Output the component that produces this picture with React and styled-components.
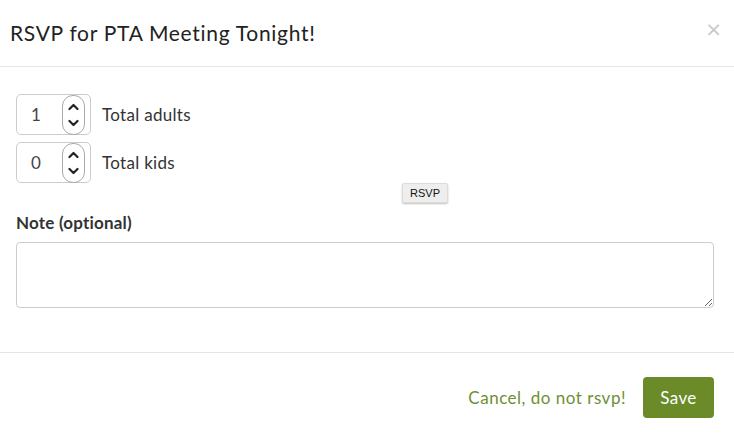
import React from "react";
import styled, { createGlobalStyle } from "styled-components";

const GlobalStyles = createGlobalStyle`
  html, body {
    margin: 0;
    padding: 0;
    background: #fff;
    font-family: Lato, "Open Sans", sans-serif;
    color: #333;
  }
`;

const Modal = styled.div`
  width: 734px;
  background: #fff;
`;

const Header = styled.header`
  display: flex;
  align-items: center;
  justify-content: space-between;
  padding: 15px 10px;
  border-bottom: 1px solid #e5e5e5;
`;

const Title = styled.h4`
  margin: 0;
  font-size: 21px;
  font-weight: 400;
  letter-spacing: 0.7px;
  line-height: 36px;
  color: #222;
`;

const Close = styled.button`
  border: 0;
  background: none;
  padding: 0 2px 8px 0;
  font-size: 20px;
  line-height: 1;
  color: #c8c8c8;
  font-family: "DejaVu Sans", sans-serif;
  cursor: pointer;
`;

const Body = styled.div`
  padding: 27px 16px 44px;
  border-bottom: 1px solid #e5e5e5;
`;

const Counter = styled.div`
  display: flex;
  align-items: center;
  gap: 11px;
  margin-bottom: 7px;
`;

const NumberBox = styled.div`
  box-sizing: border-box;
  width: 75px;
  height: 41px;
  border: 1px solid #ccc;
  border-radius: 5px;
  display: flex;
  align-items: center;
  padding-left: 14px;
  font-size: 17px;
  color: #444;
`;

const Value = styled.span`
  flex: 1;
`;

const Spinner = styled.div`
  box-sizing: border-box;
  width: 23px;
  height: 40px;
  margin-right: 5px;
  border: 1px solid #aaa;
  border-radius: 11px;
  display: flex;
  flex-direction: column;
  align-items: center;
  justify-content: space-around;
  padding: 3px 0;
`;

const Label = styled.span`
  font-size: 17px;
  letter-spacing: 0.3px;
  color: #333;
`;

const SmallButtonRow = styled.div`
  display: flex;
  padding-left: 386px;
  margin-top: -7px;
`;

const SmallButton = styled.button`
  box-sizing: border-box;
  height: 20px;
  width: 46px;
  padding: 0;
  font-family: "Liberation Sans", Arial, sans-serif;
  font-size: 11px;
  color: #111;
  background: #eee;
  border: 1px solid #ddd;
  border-radius: 2px;
  box-shadow: 0 1px 2px rgba(0, 0, 0, 0.25);
`;

const NoteLabel = styled.label`
  display: block;
  margin: 10px 0 9px;
  font-size: 17px;
  line-height: 20px;
  font-weight: 700;
  letter-spacing: 0.2px;
  color: #333;
`;

const NoteArea = styled.textarea`
  box-sizing: border-box;
  display: block;
  width: 698px;
  height: 66px;
  border: 1px solid #ccc;
  border-radius: 4px;
  font: inherit;
`;

const Footer = styled.footer`
  display: flex;
  align-items: center;
  justify-content: flex-end;
  gap: 17px;
  padding: 24px 20px 23px;
`;

const CancelLink = styled.a`
  font-size: 17px;
  letter-spacing: 0.5px;
  color: #6f8f34;
  text-decoration: none;
`;

const SaveButton = styled.button`
  width: 71px;
  height: 41px;
  border: 0;
  border-radius: 4px;
  background: #6b8b29;
  color: #fff;
  font-family: inherit;
  font-size: 17px;
  letter-spacing: 0.4px;
`;

function Chevron({ up }) {
  return (
    <svg width="11" height="8" viewBox="0 0 11 8">
      <path
        d={up ? "M1.5 6 L5.5 2 L9.5 6" : "M1.5 2 L5.5 6 L9.5 2"}
        fill="none"
        stroke="#222"
        strokeWidth="2.2"
        strokeLinecap="round"
        strokeLinejoin="round"
      />
    </svg>
  );
}

function NumberInput({ value, label }) {
  return (
    <Counter>
      <NumberBox>
        <Value>{value}</Value>
        <Spinner>
          <Chevron up />
          <Chevron />
        </Spinner>
      </NumberBox>
      <Label>{label}</Label>
    </Counter>
  );
}

export default function App() {
  return (
    <Modal>
      <GlobalStyles />
      <Header>
        <Title>RSVP for PTA Meeting Tonight!</Title>
        <Close>×</Close>
      </Header>
      <Body>
        <NumberInput value="1" label="Total adults" />
        <NumberInput value="0" label="Total kids" />
        <SmallButtonRow>
          <SmallButton>RSVP</SmallButton>
        </SmallButtonRow>
        <NoteLabel>Note (optional)</NoteLabel>
        <NoteArea />
      </Body>
      <Footer>
        <CancelLink href="#">Cancel, do not rsvp!</CancelLink>
        <SaveButton>Save</SaveButton>
      </Footer>
    </Modal>
  );
}
